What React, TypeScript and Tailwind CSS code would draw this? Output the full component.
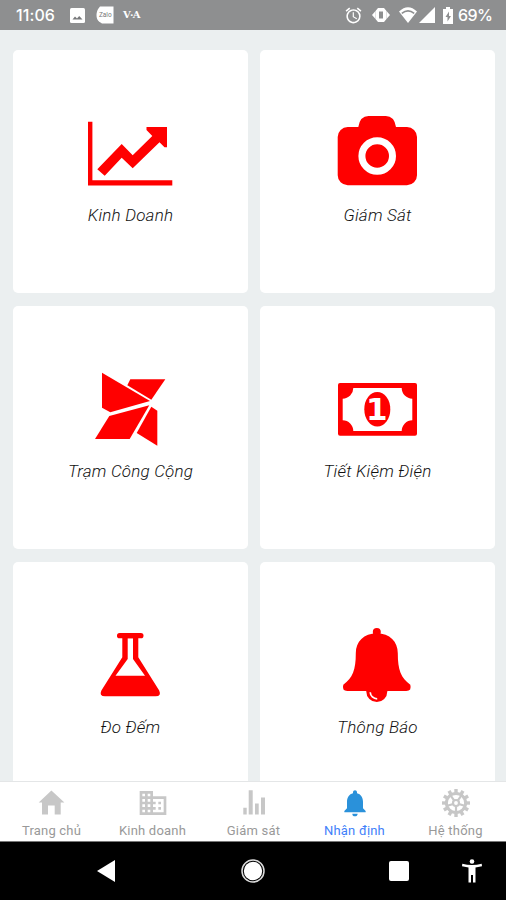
import React from 'react';
import { MdAlarm, MdBusiness, MdNotifications } from 'react-icons/md';

const RED = '#ff0000';

function ChartIcon() {
    return (
        <svg width="91" height="80" viewBox="0 0 91 80" fill={RED}>
            <path d="M3 8.7h4.4v58.6h79.9v5.3H3z" />
            <path d="M12.3 56.3 36.7 31l11 11.3L67.3 23l-5.8-6V14H82v20.3h-2.5l-5-5-26.8 26-11-10.6-17 18z" />
        </svg>
    );
}

function CameraIcon() {
    return (
        <svg width="91" height="80" viewBox="0 0 91 80" fill={RED}>
            <path d="M15.7 14h10.6q1.7-11 10.2-11h17.3q8.5 0 10.2 11h11a10 10 0 0 1 10 10v38.3a10 10 0 0 1-10 10H15.7a10 10 0 0 1-10-10V24a10 10 0 0 1 10-10z" />
            <circle cx="45.2" cy="43" r="15.3" fill="none" stroke="#fff" strokeWidth="7" />
        </svg>
    );
}

function StationIcon() {
    return (
        <svg width="91" height="80" viewBox="0 0 91 80" fill={RED}>
            <path d="M17 3.7 65 32 25.3 43.3 17 38.7z" />
            <path d="M45.3 10.3h35L66.3 30.7l-24-14.4z" />
            <path d="M24.3 47l40-10.7L44.7 70H10z" />
            <path d="M66.3 37.7l6 4v35L51.7 64z" />
        </svg>
    );
}

function MoneyIcon() {
    return (
        <svg width="91" height="80" viewBox="0 0 91 80" fill={RED}>
            <rect x="6" y="14" width="79" height="52.7" rx="2" />
            <path fill="#fff" d="M21.3 19h48.4a10.6 10.7 0 0 0 10.6 10.7v21.6A10.6 10.7 0 0 0 69.7 62H21.3a10.6 10.7 0 0 0-10.6-10.7V29.7A10.6 10.7 0 0 0 21.3 19z" />
            <ellipse cx="45.3" cy="40.3" rx="13" ry="17.3" />
            <text x="44.9" y="51.2" fill="#fff" textAnchor="middle" fontFamily="'DejaVu Sans', sans-serif" fontWeight="bold" fontSize="31">1</text>
        </svg>
    );
}

function FlaskIcon() {
    return (
        <svg width="91" height="80" viewBox="0 0 91 80" fill={RED}>
            <rect x="32" y="8" width="26.5" height="5.3" rx="2.6" />
            <path fillRule="evenodd" d="M37.3 11h16v21.3l20.9 33.2q2.6 5.8-3.6 5.8H20q-6.2 0-3.6-5.8L37.3 32.3zM42.7 13.3V34L30.5 50.7H60L48 34V13.3z" />
        </svg>
    );
}

function BellIcon() {
    return (
        <svg width="91" height="80" viewBox="0 0 91 80" fill={RED}>
            <circle cx="44.8" cy="66.5" r="10.5" />
            <circle cx="44.8" cy="7" r="4" />
            <path d="M44.8 8.3c13 0 21 8.5 21 20 0 17 3.2 24.5 12.5 31.5q1.7 6.2-4 6.2h-59q-5.7 0-4-6.2c9.3-7 12.5-14.5 12.5-31.5 0-11.5 8-20 21-20z" />
            <path d="M38.2 67.2a7 7 0 0 0 7 6.6" fill="none" stroke="#fff" strokeWidth="1.7" />
        </svg>
    );
}

function HomeIcon() {
    return (
        <svg width="32" height="32" viewBox="0 0 32 32" fill="currentColor">
            <path d="M15.4 3.500l13 12h-3.700v12h-6v-9H12v9H6v-12H2.700z" />
        </svg>
    );
}

function StatsIcon() {
    return (
        <svg width="32" height="32" viewBox="0 0 32 32" fill="currentColor">
            <path d="M5.300 20.700h3.400v6.800H5.300zM10.700 3.200h4v24.300h-4zM17 16.500h3.700v11H17zM23 10.500h4v17h-4z" />
        </svg>
    );
}

const TEETH = [0, 30, 60, 90, 120, 150, 180, 210, 240, 270, 300, 330];
const SPOKES = [36, 108, 180, 252, 324];

function GearIcon() {
    return (
        <svg width="32" height="32" viewBox="0 0 32 32" fill="none" stroke="currentColor">
            <circle cx="16" cy="16" r="9.6" strokeWidth="3" />
            <circle cx="16" cy="16" r="3" strokeWidth="2.2" />
            {TEETH.map((a) => (
                <path key={a} d="M16 2v4" strokeWidth="3.4" transform={`rotate(${a} 16 16)`} />
            ))}
            {SPOKES.map((a) => (
                <path key={a} d="M16 13V7" strokeWidth="2.2" transform={`rotate(${a} 16 16)`} />
            ))}
        </svg>
    );
}

const cards = [
    { label: 'Kinh Doanh', icon: <ChartIcon /> },
    { label: 'Giám Sát', icon: <CameraIcon /> },
    { label: 'Trạm Công Cộng', icon: <StationIcon /> },
    { label: 'Tiết Kiệm Điện', icon: <MoneyIcon /> },
    { label: 'Đo Đếm', icon: <FlaskIcon /> },
    { label: 'Thông Báo', icon: <BellIcon /> },
];

const tabs = [
    { label: 'Trang chủ', icon: <HomeIcon /> },
    { label: 'Kinh doanh', icon: <MdBusiness size={32} /> },
    { label: 'Giám sát', icon: <StatsIcon /> },
    { label: 'Nhận định', icon: <MdNotifications size={32} />, active: true },
    { label: 'Hệ thống', icon: <GearIcon /> },
];

function StatusBar() {
    return (
        <div className="flex h-[30px] shrink-0 items-center bg-[#8e8f90] pl-4 pr-[14px] text-white">
            <span className="w-[54px] font-[Inter] text-[16px] font-medium leading-[30px] tracking-[0.1px]">11:06</span>
            <svg width="15" height="15" viewBox="0 0 15 15">
                <rect width="15" height="15" rx="1.5" fill="#fff" />
                <path d="M2.5 11.5l2.5-3 2 2 2.2-2.5 3.3 3.5z" fill="#77787a" />
            </svg>
            <svg className="ml-[11px]" width="18" height="18" viewBox="0 0 18 18">
                <path d="M4 .5h13.5v17H6L3 15.5Q.5 13.5.5 9T4 .5z" fill="#fff" />
                <text x="9.3" y="11" textAnchor="middle" fontFamily="Roboto, sans-serif" fontSize="6.5" fill="#777">Zalo</text>
            </svg>
            <span className="ml-[9px] font-['DejaVu_Serif'] text-[10px] font-bold leading-none tracking-[-0.7px]">V·A</span>
            <div className="ml-auto flex items-center">
                <MdAlarm size={19} />
                <svg className="ml-[9px]" width="18" height="14" viewBox="0 0 18 14" fill="#fff">
                    <path d="M0 7l3.5-4v8zM18 7l-3.500-4v8z" />
                    <path fillRule="evenodd" d="M6 0h6l2.500 3v8L12 14H6l-2.500-3V3zM7 3.500v7h4v-7z" />
                </svg>
                <svg className="ml-[9px]" width="18" height="16" viewBox="0 0 18 16">
                    <path d="M0 4.500Q9-4 18 4.500L9 16z" fill="#fff" />
                    <path d="M2.800 6.400q6.200-5 12.400 0" fill="none" stroke="#8e8f90" strokeWidth="1.6" />
                </svg>
                <svg className="ml-[2px]" width="16" height="16" viewBox="0 0 16 16">
                    <path d="M16 0v16H0z" fill="#fff" />
                </svg>
                <svg className="ml-[8px]" width="10" height="17" viewBox="0 0 10 17">
                    <path d="M3 0h4v2h3v15H0V2h3z" fill="#fff" />
                    <path d="M6 4.500L2.500 10h2v4.500L8 9H6z" fill="#8e8f90" />
                </svg>
                <span className="ml-[5px] w-[34px] whitespace-nowrap font-[Inter] text-[16px] font-medium leading-[30px] tracking-[-0.6px]">69%</span>
            </div>
        </div>
    );
}

export default function App() {
    return (
        <div className="flex h-[900px] w-[506px] flex-col overflow-hidden bg-[#ebeff0] font-[Roboto,sans-serif]">
            <StatusBar />

            <div className="grid min-h-0 flex-1 auto-rows-[243px] grid-cols-[235px_235px] gap-x-3 gap-y-[13px] overflow-hidden pl-[13px] pt-5">
                {cards.map((card) => (
                    <div key={card.label} className="flex flex-col items-center rounded-[5px] bg-white pt-[63px]">
                        {card.icon}
                        <span className="mt-3 whitespace-nowrap text-[17px] font-light italic leading-[21px] tracking-[0.2px] text-[#111]">{card.label}</span>
                    </div>
                ))}
            </div>

            <div className="grid h-[60px] shrink-0 grid-cols-5 border-t border-[#e4e6e7] bg-white pl-px">
                {tabs.map((tab) => (
                    <div key={tab.label} className={`flex flex-col items-center pt-[5px] ${tab.active ? 'text-[#2a91da]' : 'text-[#c7c7c7]'}`}>
                        {tab.icon}
                        <span className={`mt-1 whitespace-nowrap text-[13px] leading-4 tracking-[0.2px] ${tab.active ? 'text-[#3f80fa]' : 'text-[#999]'}`}>{tab.label}</span>
                    </div>
                ))}
            </div>

            <div className="grid h-[59px] shrink-0 grid-cols-[212px_82px_212px] items-center border-t border-[#777] bg-black">
                <svg className="ml-[97px]" width="18" height="22" viewBox="0 0 18 22">
                    <path d="M18 0v22L0 11z" fill="#fff" />
                </svg>
                <svg className="mx-auto" width="24" height="24" viewBox="0 0 24 24">
                    <circle cx="12" cy="12" r="11" fill="none" stroke="#ddd" strokeWidth="1.5" />
                    <circle cx="12" cy="12" r="9.2" fill="#fff" />
                </svg>
                <div className="flex items-center pl-[95px]">
                    <div className="size-5 rounded-[2px] bg-white" />
                    <svg className="ml-[53px]" width="20" height="24" viewBox="0 0 20 24" fill="#fff">
                        <circle cx="10" cy="2.5" r="2.3" />
                        <path d="M.3 4.800Q10 7.400 19.700 4.800l.3 2.400-6.500 1.300V23.500H11V16H9v7.500H6.500v-15L0 7.200z" />
                    </svg>
                </div>
            </div>
        </div>
    );
}
